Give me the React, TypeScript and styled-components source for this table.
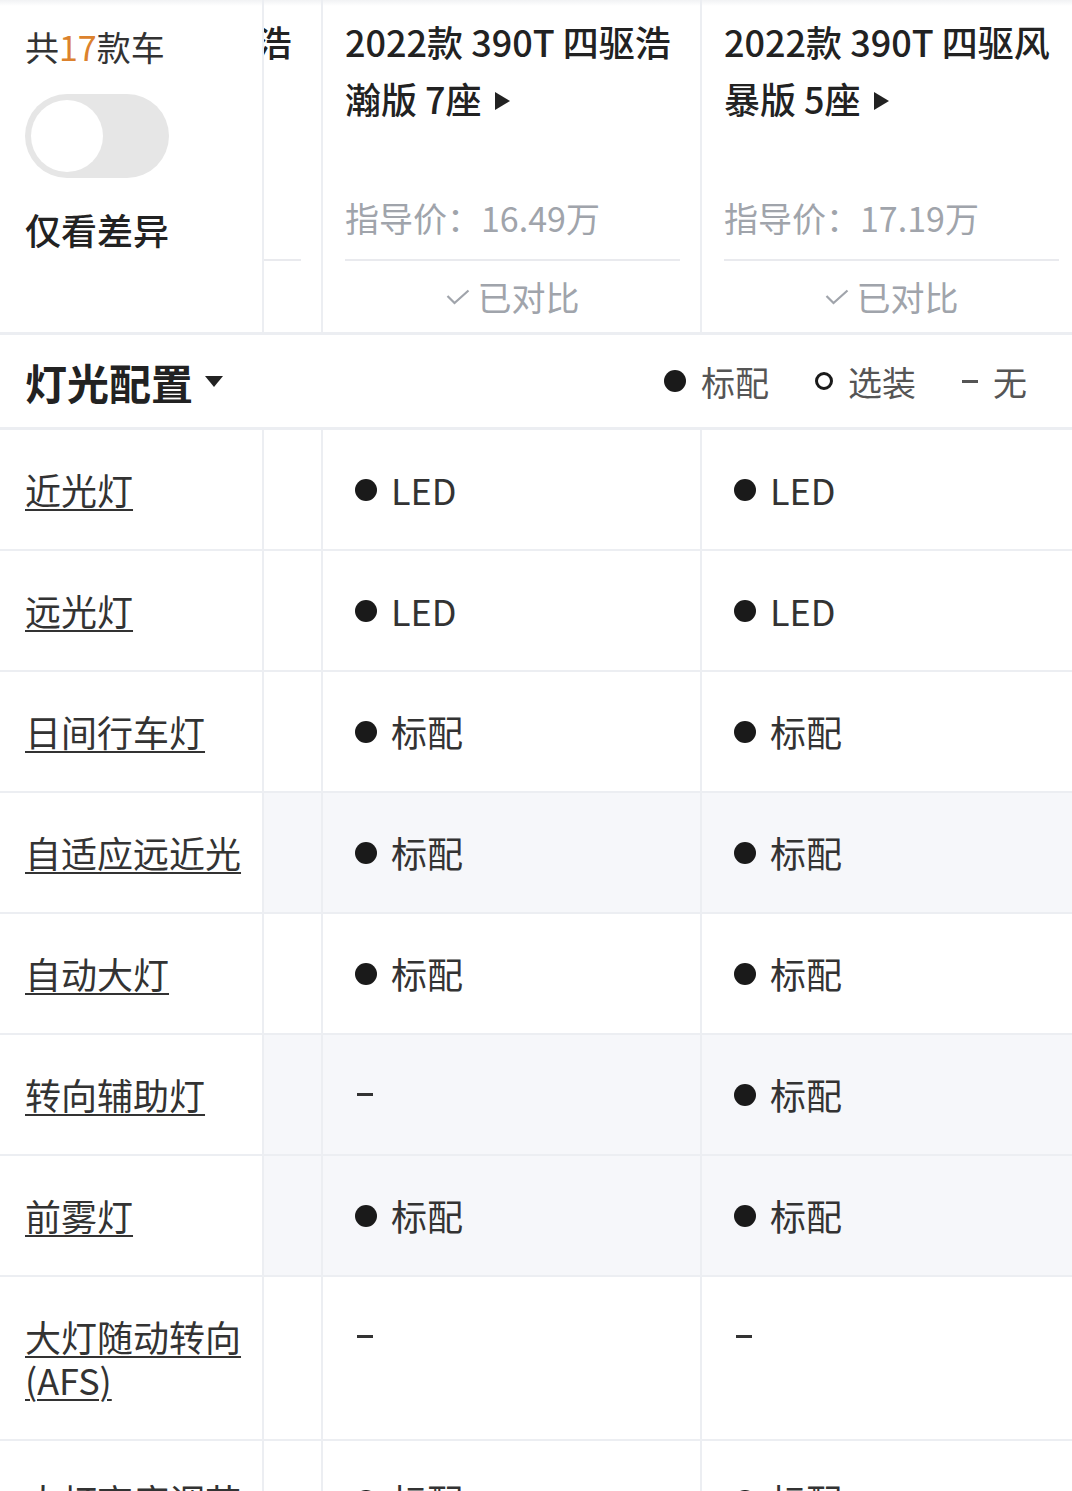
import styled, { createGlobalStyle } from "styled-components";

const GlobalStyle = createGlobalStyle`
  html, body {
    margin: 0;
    padding: 0;
    background: #fff;
  }
  body {
    font-family: "Noto Sans CJK SC", "Noto Sans", sans-serif;
    color: #222;
  }
  * {
    box-sizing: border-box;
  }
`;

type Value = string | null;

interface Car {
    name: string;
    price: string;
}

interface SpecRow {
    label: string;
    values: Value[];
    shaded?: boolean;
}

const cars: Car[] = [
    { name: "2022款 330T 四驱浩瀚版 7座", price: "15.79万" },
    { name: "2022款 390T 四驱浩瀚版 7座", price: "16.49万" },
    { name: "2022款 390T 四驱风暴版 5座", price: "17.19万" },
];

const rows: SpecRow[] = [
    { label: "近光灯", values: ["LED", "LED", "LED"] },
    { label: "远光灯", values: ["LED", "LED", "LED"] },
    { label: "日间行车灯", values: ["标配", "标配", "标配"] },
    { label: "自适应远近光", values: ["标配", "标配", "标配"], shaded: true },
    { label: "自动大灯", values: ["标配", "标配", "标配"] },
    { label: "转向辅助灯", values: ["标配", null, "标配"], shaded: true },
    { label: "前雾灯", values: ["标配", "标配", "标配"], shaded: true },
    { label: "大灯随动转向(AFS)", values: [null, null, null] },
    { label: "大灯高度调节", values: ["标配", "标配", "标配"] },
];

const LINE = "#eceef2";
const SCROLL_OFFSET = 320; // horizontal scroll position of the car columns

const Page = styled.div`
  width: 100%;
  background: #fff;
`;

/* ---------- header ---------- */

const Header = styled.div`
  display: flex;
  height: 335px;
  border-bottom: 3px solid ${LINE};
  background: linear-gradient(#f1f2f4, #fff 6px);
`;

const HeadLeft = styled.div`
  width: 264px;
  flex: none;
  padding: 22px 0 0 25px;
  border-right: 2px solid ${LINE};
  display: flex;
  flex-direction: column;
  align-items: flex-start;
`;

const Count = styled.div`
  font-size: 34px;
  line-height: 50px;
  color: #333;

  em {
    font-style: normal;
    color: #dc822d;
  }
`;

const Toggle = styled.div`
  margin-top: 22px;
  width: 144px;
  height: 84px;
  border-radius: 42px;
  background: #e6e6e6;
  padding: 6px;
`;

const Knob = styled.div`
  width: 72px;
  height: 72px;
  border-radius: 50%;
  background: #fff;
`;

const DiffLabel = styled.div`
  margin-top: 26px;
  font-size: 36px;
  line-height: 50px;
  font-weight: 500;
  color: #222;
`;

const Viewport = styled.div<{ $shaded?: boolean }>`
  flex: 1;
  min-width: 0;
  display: flex;
  overflow: hidden;
  background: ${(p) => (p.$shaded ? "#f6f7fa" : "transparent")};
`;

const Track = styled.div`
  display: flex;
  flex: none;
  margin-left: -${SCROLL_OFFSET}px;
`;

const HeadCol = styled.div`
  width: 379px;
  flex: none;
  height: 332px;
  border-right: 2px solid ${LINE};
  padding: 13px 20px 0 22px;
  display: flex;
  flex-direction: column;
`;

const Title = styled.div`
  height: 114px;
  font-size: 36px;
  line-height: 57px;
  font-weight: 500;
  color: #222;
  overflow: hidden;
`;

const PlayArrow = styled.span`
  display: inline-block;
  width: 0;
  height: 0;
  margin-left: 13px;
  vertical-align: 4px;
  border-top: 9px solid transparent;
  border-bottom: 9px solid transparent;
  border-left: 15px solid #222;
`;

const Price = styled.div`
  margin-top: 66px;
  padding-bottom: 16px;
  border-bottom: 2px solid #e9eaee;
  font-size: 34px;
  line-height: 50px;
  color: #a0a4ab;
  white-space: nowrap;
`;

const Compared = styled.div`
  flex: 1;
  display: flex;
  align-items: center;
  justify-content: center;
  gap: 8px;
  font-size: 34px;
  color: #a0a4ab;
`;

/* ---------- section header ---------- */

const Section = styled.div`
  height: 95px;
  border-bottom: 3px solid ${LINE};
  display: flex;
  align-items: center;
  justify-content: space-between;
  padding: 0 45px 0 25px;
`;

const SectionTitle = styled.div`
  display: flex;
  align-items: center;
  gap: 12px;
  font-size: 42px;
  font-weight: 700;
  color: #222;
`;

const DownArrow = styled.span`
  width: 0;
  height: 0;
  border-left: 9px solid transparent;
  border-right: 9px solid transparent;
  border-top: 11px solid #222;
`;

const Legend = styled.div`
  display: flex;
  align-items: center;
  gap: 46px;
`;

const LegendItem = styled.div`
  display: flex;
  align-items: center;
  gap: 15px;
  font-size: 34px;
  color: #555;
`;

const Dot = styled.span`
  width: 22px;
  height: 22px;
  flex: none;
  border-radius: 50%;
  background: #1a1a1a;
`;

const Ring = styled.span`
  width: 18px;
  height: 18px;
  flex: none;
  border-radius: 50%;
  border: 3px solid #1a1a1a;
`;

const Dash = styled.span<{ $light?: boolean }>`
  width: 16px;
  height: 3px;
  flex: none;
  margin-left: ${(p) => (p.$light ? "0" : "2px")};
  background: ${(p) => (p.$light ? "#555" : "#333")};
`;

/* ---------- spec rows ---------- */

const Row = styled.div`
  display: flex;
  border-bottom: 2px solid ${LINE};
`;

const LabelCell = styled.div`
  width: 264px;
  flex: none;
  padding: 38px 20px 38px 25px;
  border-right: 2px solid ${LINE};
  background: #fff;
  font-size: 36px;
  line-height: 43px;
  color: #333;

  span {
    text-decoration: underline;
    text-decoration-thickness: 2px;
    text-underline-offset: 4px;
  }
`;

const Cell = styled.div`
  width: 379px;
  flex: none;
  padding: 38px 20px 38px 32px;
  border-right: 2px solid ${LINE};
  font-size: 36px;
  line-height: 43px;
  color: #333;
`;

const ValueLine = styled.div`
  height: 43px;
  display: flex;
  align-items: center;
  gap: 14px;
`;

function CheckIcon() {
    return (
        <svg width="24" height="16" viewBox="0 0 24 16" fill="none">
            <polyline points="1.5,7 8.5,14 22.5,1.5" stroke="#a0a4ab" strokeWidth="2.2" />
        </svg>
    );
}

function SpecValue({ value }: { value: Value }) {
    if (value === null) {
        return (
            <ValueLine>
                <Dash />
            </ValueLine>
        );
    }
    return (
        <ValueLine>
            <Dot />
            <span>{value}</span>
        </ValueLine>
    );
}

export default function App() {
    return (
        <Page>
            <GlobalStyle />

            <Header>
                <HeadLeft>
                    <Count>
                        共<em>17</em>款车
                    </Count>
                    <Toggle>
                        <Knob />
                    </Toggle>
                    <DiffLabel>仅看差异</DiffLabel>
                </HeadLeft>
                <Viewport>
                    <Track>
                        {cars.map((car) => (
                            <HeadCol key={car.name}>
                                <Title>
                                    {car.name}
                                    <PlayArrow />
                                </Title>
                                <Price>指导价：{car.price}</Price>
                                <Compared>
                                    <CheckIcon />
                                    已对比
                                </Compared>
                            </HeadCol>
                        ))}
                    </Track>
                </Viewport>
            </Header>

            <Section>
                <SectionTitle>
                    灯光配置
                    <DownArrow />
                </SectionTitle>
                <Legend>
                    <LegendItem>
                        <Dot />
                        标配
                    </LegendItem>
                    <LegendItem>
                        <Ring />
                        选装
                    </LegendItem>
                    <LegendItem>
                        <Dash $light />
                        无
                    </LegendItem>
                </Legend>
            </Section>

            {rows.map((row) => (
                <Row key={row.label}>
                    <LabelCell>
                        <span>{row.label}</span>
                    </LabelCell>
                    <Viewport $shaded={row.shaded}>
                        <Track>
                            {row.values.map((v, i) => (
                                <Cell key={i}>
                                    <SpecValue value={v} />
                                </Cell>
                            ))}
                        </Track>
                    </Viewport>
                </Row>
            ))}
        </Page>
    );
}
